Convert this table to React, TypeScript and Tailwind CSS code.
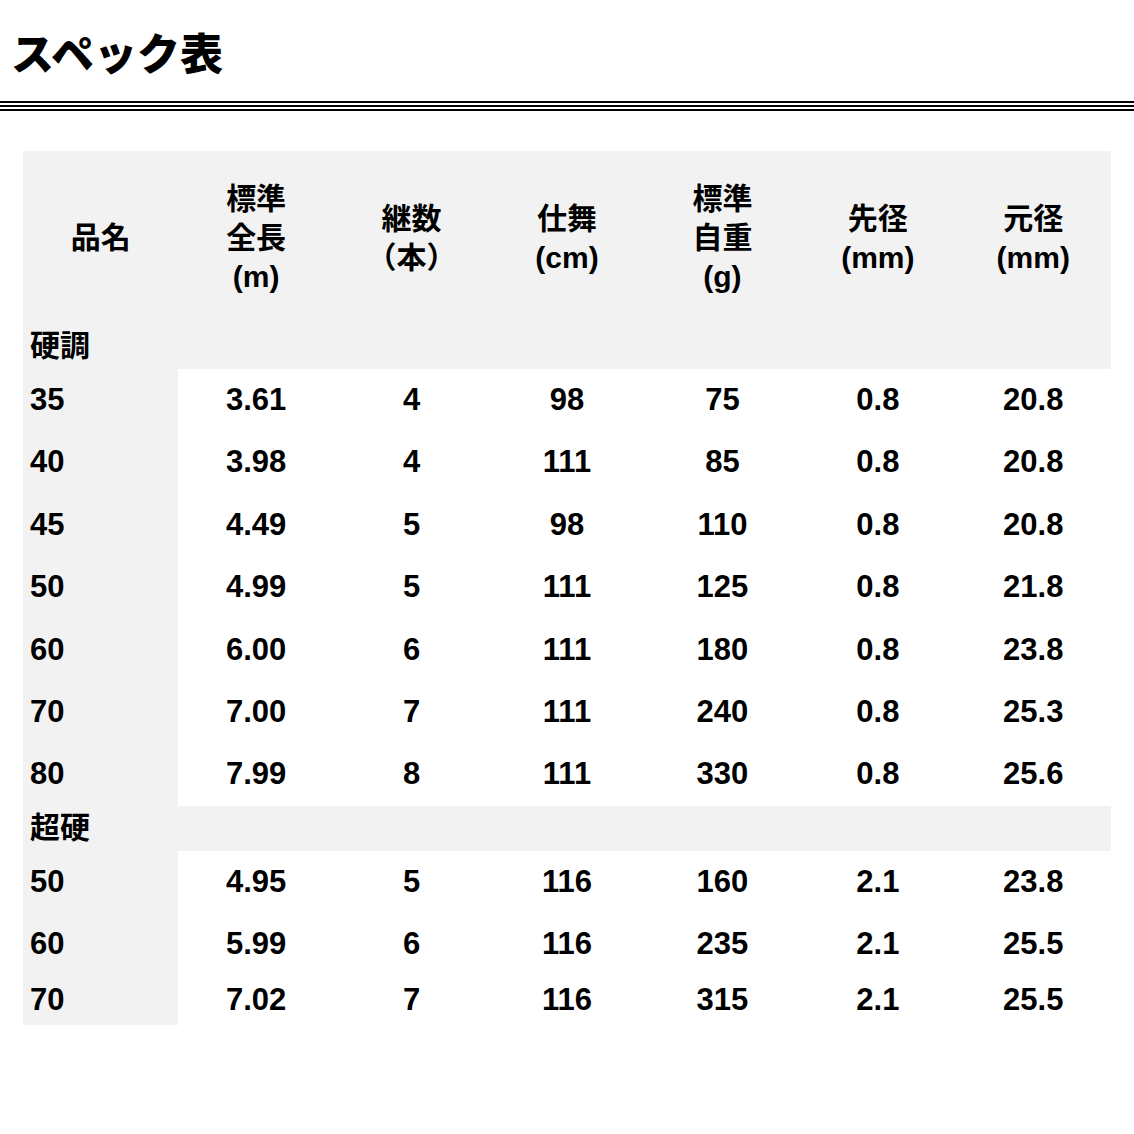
const font = { fontFamily: '"Liberation Sans", "Noto Sans CJK JP", sans-serif' };

type Row = [string, string, string, string, string, string, string];

const headers: string[][] = [
  ["品名"],
  ["標準", "全長", "(m)"],
  ["継数", "（本）"],
  ["仕舞", "(cm)"],
  ["標準", "自重", "(g)"],
  ["先径", "(mm)"],
  ["元径", "(mm)"],
];

const hard: Row[] = [
  ["35", "3.61", "4", "98", "75", "0.8", "20.8"],
  ["40", "3.98", "4", "111", "85", "0.8", "20.8"],
  ["45", "4.49", "5", "98", "110", "0.8", "20.8"],
  ["50", "4.99", "5", "111", "125", "0.8", "21.8"],
  ["60", "6.00", "6", "111", "180", "0.8", "23.8"],
  ["70", "7.00", "7", "111", "240", "0.8", "25.3"],
  ["80", "7.99", "8", "111", "330", "0.8", "25.6"],
];

const extraHard: Row[] = [
  ["50", "4.95", "5", "116", "160", "2.1", "23.8"],
  ["60", "5.99", "6", "116", "235", "2.1", "25.5"],
  ["70", "7.02", "7", "116", "315", "2.1", "25.5"],
];

const DataRow = ({ row, short }: { row: Row; short?: boolean }) => (
  <div className={`grid grid-cols-7 ${short ? "h-[56px]" : "h-[62.4px]"}`}>
    {row.map((cell, i) => (
      <div
        key={i}
        className={
          i === 0
            ? "flex bg-[#f2f2f2] pl-[7px] pt-[16px]"
            : "flex justify-center pt-[16px]"
        }
      >
        <span className="text-[31px] leading-[30px]">{cell}</span>
      </div>
    ))}
  </div>
);

const SectionRow = ({ label, className }: { label: string; className: string }) => (
  <div className={`flex items-center bg-[#f2f2f2] pl-[7px] ${className}`}>
    <span className="leading-[30px]">{label}</span>
  </div>
);

export default function App() {
  return (
    <div className="min-h-[1134px] w-[1134px] bg-white text-black" style={font}>
      <h1 className="pl-[11px] pt-[29px] text-[43px] font-black leading-[52px]">
        スペック表
      </h1>

      <div className="mt-[20px] flex flex-col gap-[2px]">
        <div className="h-[2px] bg-black" />
        <div className="h-[2px] bg-black" />
        <div className="h-[2px] bg-black" />
      </div>

      <div className="ml-[23px] mt-[40px] w-[1088px] text-[30px] font-bold">
        <div className="grid h-[171px] grid-cols-7 bg-[#f2f2f2]">
          {headers.map((lines, i) => (
            <div
              key={i}
              className="flex flex-col items-center justify-center pt-[2px] leading-[39px]"
            >
              {lines.map((l, j) => (
                <span key={j}>{l}</span>
              ))}
            </div>
          ))}
        </div>
        <SectionRow label="硬調" className="h-[47px]" />
        {hard.map((r, i) => (
          <DataRow key={i} row={r} />
        ))}
        <SectionRow label="超硬" className="h-[45px]" />
        {extraHard.map((r, i) => (
          <DataRow key={i} row={r} short={i > 0} />
        ))}
      </div>
    </div>
  );
}
